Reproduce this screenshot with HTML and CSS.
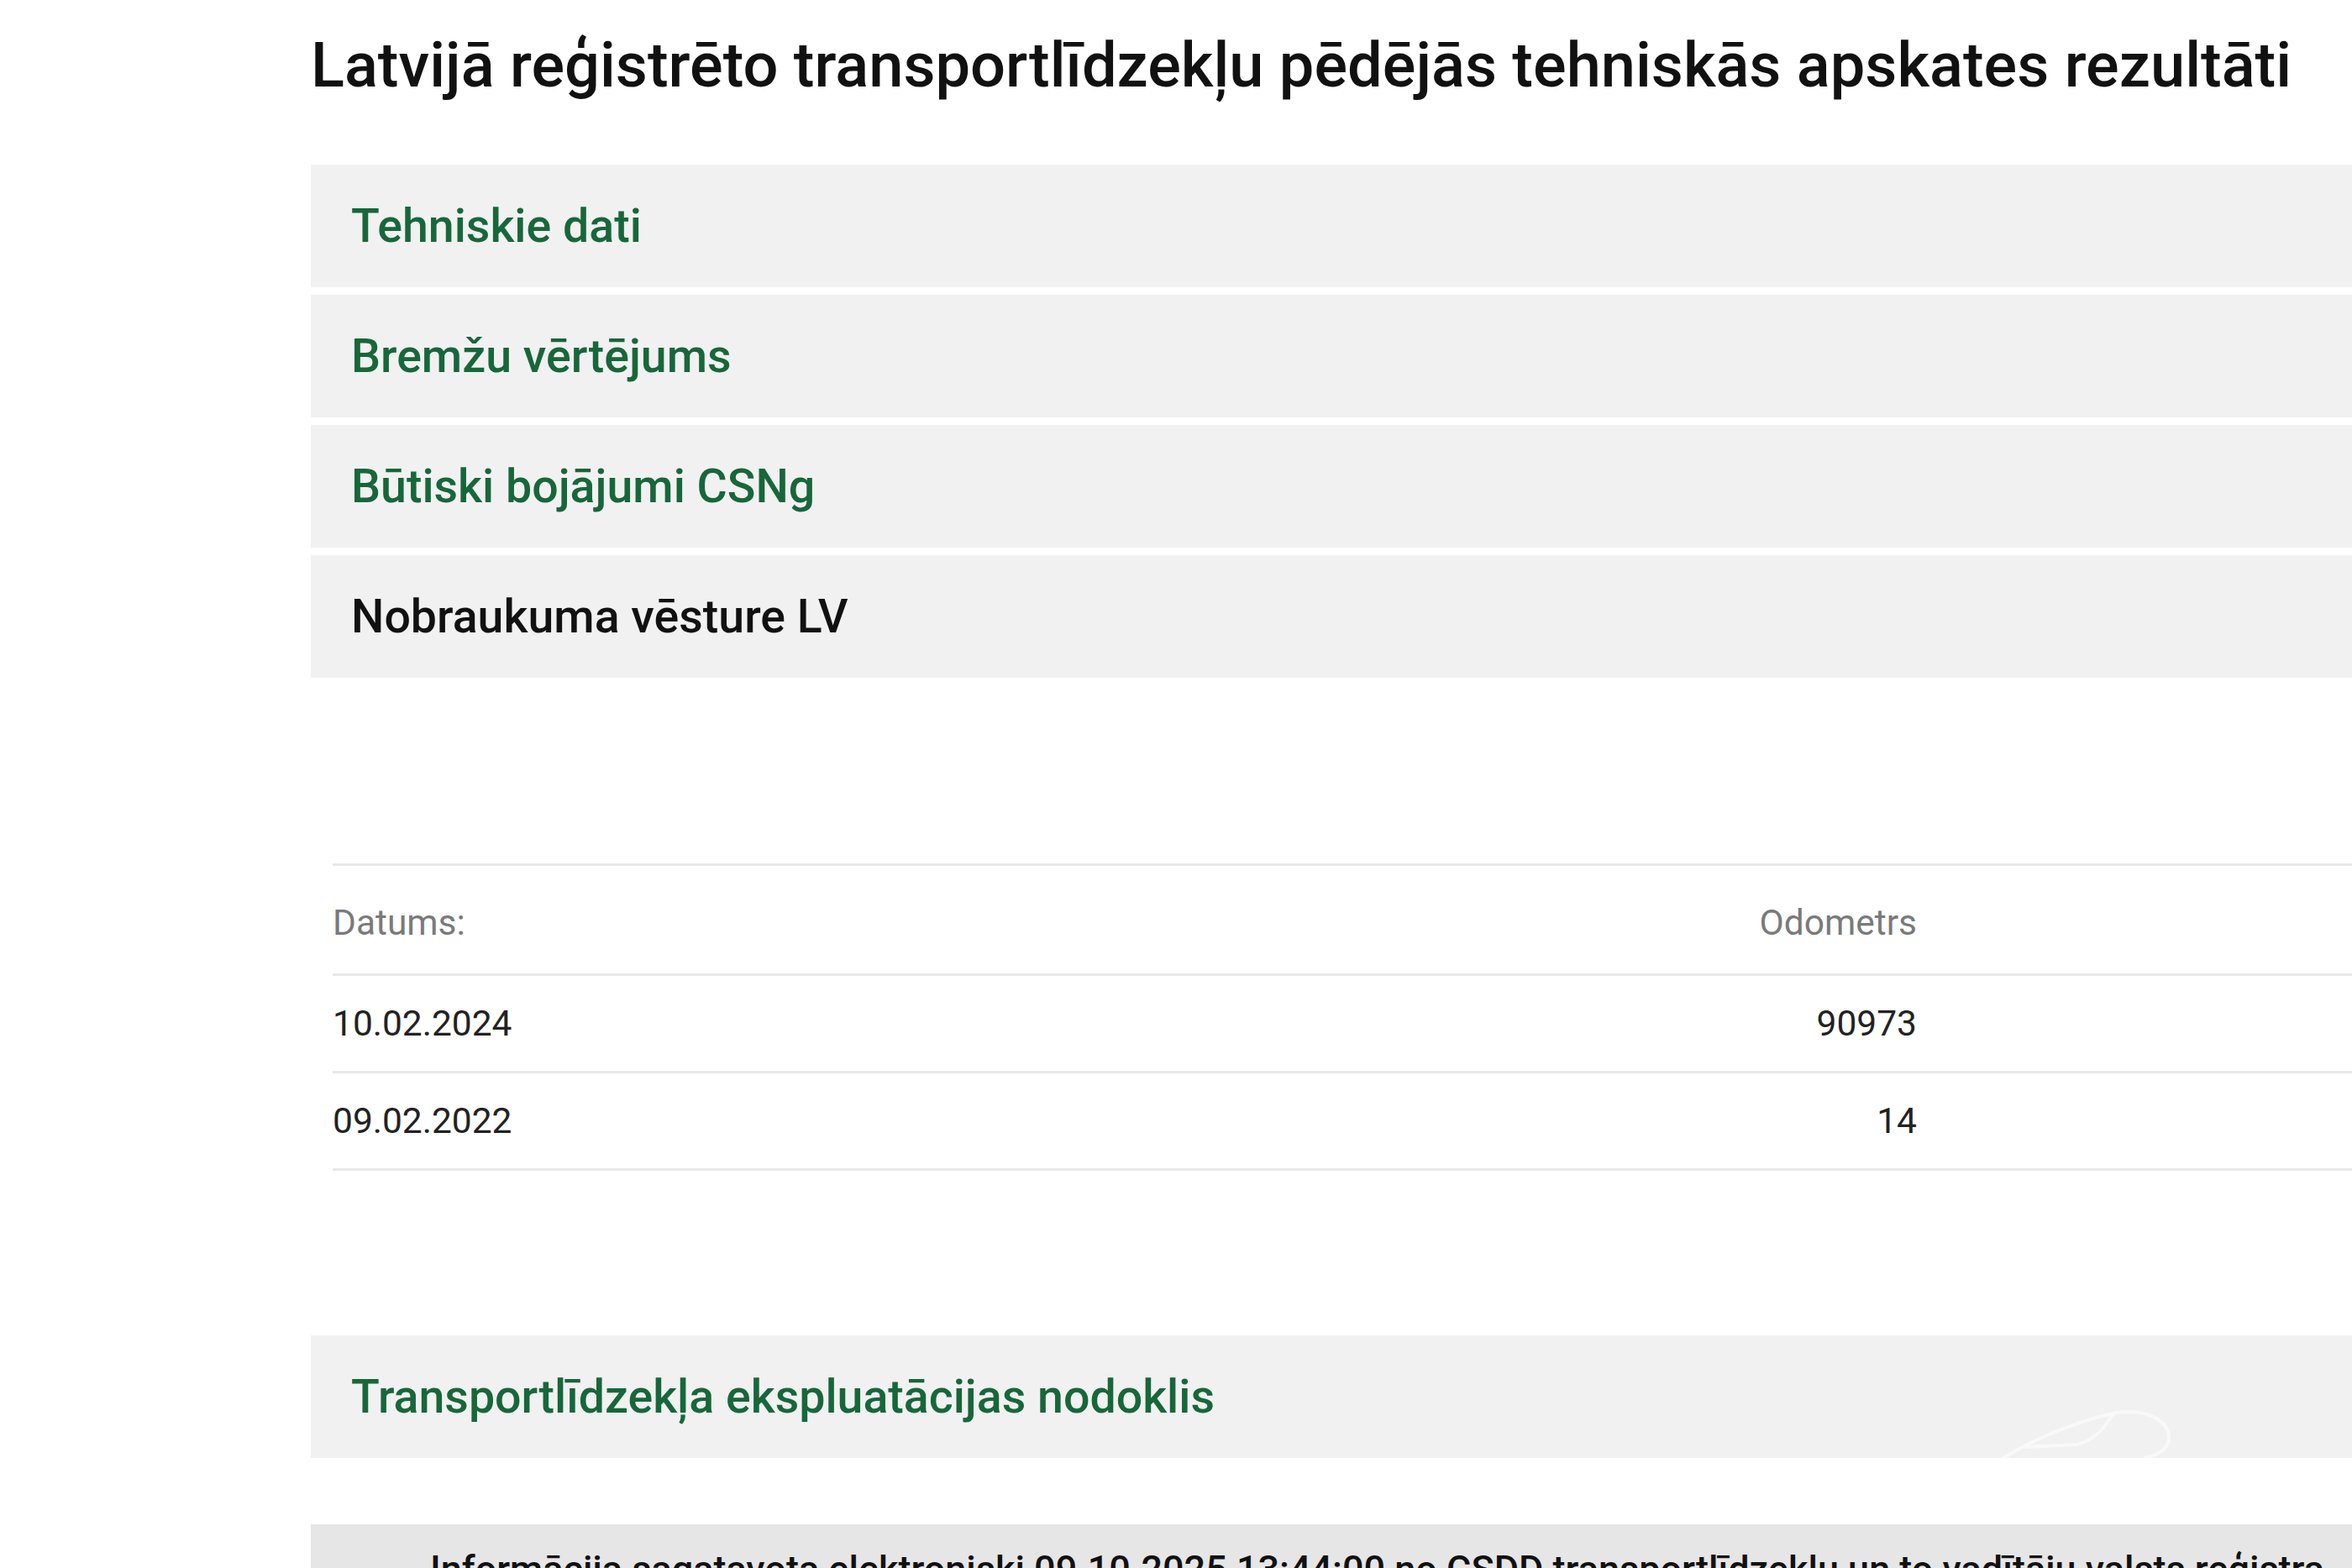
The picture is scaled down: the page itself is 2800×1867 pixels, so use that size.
FILE: index.html
```html
<!DOCTYPE html>
<html lang="lv">
<head>
    <meta charset="utf-8">
    <title>Tehniskās apskates rezultāti</title>
    <link rel="stylesheet" href="styles.css">
</head>
<body>
    <div class="page">
        <h1 class="page-title">Latvijā reģistrēto transportlīdzekļu pēdējās tehniskās apskates rezultāti</h1>

        <div class="section">
            <div class="section-head">Tehniskie dati</div>
        </div>
        <div class="section">
            <div class="section-head">Bremžu vērtējums</div>
        </div>
        <div class="section">
            <div class="section-head">Būtiski bojājumi CSNg</div>
        </div>
        <div class="section open">
            <div class="section-head">Nobraukuma vēsture LV</div>
        </div>

        <div class="mileage">
            <div class="mileage-row head">
                <div class="cell">Datums:</div>
                <div class="cell num">Odometrs</div>
                <div class="cell"></div>
            </div>
            <div class="mileage-row">
                <div class="cell">10.02.2024</div>
                <div class="cell num">90973</div>
                <div class="cell"></div>
            </div>
            <div class="mileage-row">
                <div class="cell">09.02.2022</div>
                <div class="cell num">14</div>
                <div class="cell"></div>
            </div>
        </div>

        <div class="section tax">
            <div class="section-head">Transportlīdzekļa ekspluatācijas nodoklis</div>
            <svg class="watermark" width="230" height="90" viewBox="0 0 230 90">
                <path d="M6 70 C50 40 110 18 150 10 C186 5 212 20 212 40 C212 52 202 60 182 64" />
                <path d="M146 11 C134 30 122 44 102 48 L40 51" />
                <path d="M0 84 C10 70 30 66 46 72" />
                <path d="M136 84 C148 70 168 66 186 72" />
            </svg>
        </div>

        <div class="footer-note">
            Informācija sagatavota elektroniski 09.10.2025 13:44:00 no CSDD transportlīdzekļu un to vadītāju valsts reģistra
        </div>
    </div>
</body>
</html>
```

FILE: styles.css
```css
html, body { margin: 0; padding: 0; background: #fff; overflow: hidden; }
body { font-family: Roboto, "Liberation Sans", sans-serif; color: #111; }

.page { width: 2600px; padding-left: 370px; }

.page-title {
    margin: 0 0 68px 0; padding-top: 28px;
    font-size: 74px; line-height: 100px; font-weight: 500; color: #111; white-space: nowrap;
}

.section {
    position: relative; overflow: hidden;
    height: 146px; margin-bottom: 9px; background-color: #f1f1f1;
    display: flex; align-items: center; padding-left: 48px;
}
.section-head { font-size: 55.5px; font-weight: 500; color: #17673a; white-space: nowrap; }
.section.open .section-head { color: #111; }
.section.tax { margin-top: 196px; margin-bottom: 0; }

.watermark { position: absolute; left: 2000px; top: 82px; fill: none; stroke: #fff; stroke-width: 4; opacity: 0.6; }

.mileage { margin: 221px 0 0 26px; border-top: 3px solid #e8e8e8; }
.mileage-row {
    display: grid; grid-template-columns: 1500px 386px 1fr;
    height: 113px; align-items: center; border-bottom: 3px solid #e8e8e8;
    font-size: 42.5px; color: #222;
}
.mileage-row.head { box-sizing: border-box; height: 131px; padding-top: 6px; color: #7a7a7a; }
.cell.num { text-align: right; }

.footer-note {
    margin-top: 79px; background-color: #e6e6e6;
    padding: 24px 0 40px 142px;
    font-size: 45px; line-height: 60px; font-weight: 500; color: #111; white-space: nowrap;
}
```
